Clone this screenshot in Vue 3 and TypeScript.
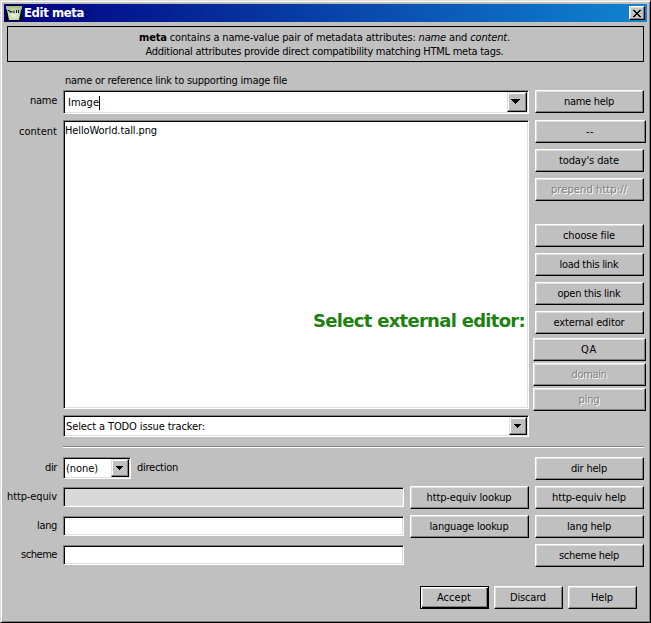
<script setup lang="ts">
interface Action {
  label: string
  width: number
  disabled?: boolean
  kind?: string
}

interface Row {
  label: string
  width: number
  disabled?: boolean
  lookup?: Action
  help: Action
}

// Spreads a label's letters so that it takes the given width in pixels.
const vFit = {
  mounted(el: HTMLElement, binding: { value: number }) {
    const count = (el.textContent ?? '').length
    if (count < 2) return
    const spacing = (binding.value - el.getBoundingClientRect().width) / count
    el.style.letterSpacing = `${spacing.toFixed(3)}px`
  },
}

const actions: Action[] = [
  { label: 'name help', width: 50, kind: 'first' },
  { label: '--', width: 8, kind: 'dash' },
  { label: "today's date", width: 60 },
  { label: 'prepend http://', width: 76, disabled: true, kind: 'prepend' },
  { label: 'choose file', width: 52 },
  { label: 'load this link', width: 59 },
  { label: 'open this link', width: 63 },
  { label: 'external editor', width: 71, kind: 'editor' },
  { label: 'QA', width: 16, kind: 'tight' },
  { label: 'domain', width: 35, disabled: true, kind: 'tight' },
  { label: 'ping', width: 21, disabled: true, kind: 'tight' },
]

const rows: Row[] = [
  {
    label: 'http-equiv',
    width: 50,
    disabled: true,
    lookup: { label: 'http-equiv lookup', width: 85 },
    help: { label: 'http-equiv help', width: 74 },
  },
  {
    label: 'lang',
    width: 20,
    lookup: { label: 'language lookup', width: 79 },
    help: { label: 'lang help', width: 44 },
  },
  { label: 'scheme', width: 36, help: { label: 'scheme help', width: 60 } },
]

const footer: Action[] = [
  { label: 'Accept', width: 34, kind: 'default' },
  { label: 'Discard', width: 36 },
  { label: 'Help', width: 22 },
]
</script>

<template>
  <div class="window">
    <header class="titlebar">
      <svg class="logo" width="16" height="16" viewBox="0 0 16 16">
        <defs>
          <radialGradient id="cup" cx=".5" cy=".65" r=".65">
            <stop offset="0" stop-color="#edf6e2" />
            <stop offset="1" stop-color="#a3bd8c" />
          </radialGradient>
        </defs>
        <rect width="16" height="16" fill="#050805" />
        <path d="M0 1h16v3l-1 1-1 5-1 5H3L2 10 1 5 0 4z" fill="url(#cup)" />
        <path d="M2 5.5h1.500v1H5v1.500M6 6v1.500M8 5.500v3M10.500 5v3M12.500 5v3" fill="none" stroke="#101810" />
      </svg>
      <h1><span v-fit="60">Edit meta</span></h1>
      <button class="close" aria-label="Close">
        <svg width="8" height="7" viewBox="0 0 8 7" shape-rendering="crispEdges">
          <path
            d="M0 0h2v1h1v1h2v-1h1v-1h2v1h-1v1h-1v1h-1v1h1v1h1v1h1v1h-2v-1h-1v-1h-2v1h-1v1h-2v-1h1v-1h1v-1h1v-1h-1v-1h-1v-1h-1z"
          />
        </svg>
      </button>
    </header>

    <section class="info">
      <p>
        <span v-fit="371"><b>meta</b> contains a name-value pair of metadata attributes: <i>name</i> and <i>content</i>.</span>
      </p>
      <p><span v-fit="358">Additional attributes provide direct compatibility matching HTML meta tags.</span></p>
    </section>

    <main class="main">
      <div class="labels">
        <label class="name-label"><span v-fit="27">name</span></label>
        <label><span v-fit="38">content</span></label>
      </div>
      <div class="fields">
        <div class="hint"><span v-fit="222">name or reference link to supporting image file</span></div>
        <div class="combo editable">
          <div class="value"><span v-fit="31">Image</span><i class="caret"></i></div>
          <button class="drop" aria-label="Names"><svg width="9" height="5" shape-rendering="crispEdges"><path d="M0 0h9v1h-1v1h-1v1h-1v1h-1v1h-1v-1h-1v-1h-1v-1h-1v-1h-1z" /></svg></button>
        </div>
        <div class="area">
          <div class="content"><span v-fit="92">HelloWorld.tall.png</span></div>
          <div class="notice"><span v-fit="212">Select external editor:</span></div>
        </div>
        <div class="combo tracker">
          <div class="value"><span v-fit="139">Select a TODO issue tracker:</span></div>
          <button class="drop" aria-label="Trackers"><svg width="7" height="4" shape-rendering="crispEdges"><path d="M0 0h7v1h-1v1h-1v1h-1v1h-1v-1h-1v-1h-1v-1h-1z" /></svg></button>
        </div>
      </div>
      <div class="actions">
        <button v-for="a in actions" :key="a.label" class="button" :class="[a.kind, { off: a.disabled }]">
          <span v-fit="a.width">{{ a.label }}</span>
        </button>
      </div>
    </main>

    <hr />

    <section class="rows">
      <div class="row">
        <label><span v-fit="12">dir</span></label>
        <div class="middle">
          <div class="combo dir">
            <div class="value"><span v-fit="32">(none)</span></div>
            <button class="drop" aria-label="Directions"><svg width="7" height="4" shape-rendering="crispEdges"><path d="M0 0h7v1h-1v1h-1v1h-1v1h-1v-1h-1v-1h-1v-1h-1z" /></svg></button>
          </div>
          <div class="direction"><span v-fit="41">direction</span></div>
        </div>
        <button class="button"><span v-fit="36">dir help</span></button>
      </div>
      <div v-for="r in rows" :key="r.label" class="row">
        <label><span v-fit="r.width">{{ r.label }}</span></label>
        <div class="middle">
          <div class="input" :class="{ filled: r.disabled }"></div>
          <button v-if="r.lookup" class="button lookup">
            <span v-fit="r.lookup.width">{{ r.lookup.label }}</span>
          </button>
        </div>
        <button class="button"><span v-fit="r.help.width">{{ r.help.label }}</span></button>
      </div>
    </section>

    <footer class="footer">
      <button v-for="f in footer" :key="f.label" class="button" :class="f.kind">
        <span v-fit="f.width">{{ f.label }}</span>
      </button>
    </footer>
  </div>
</template>

<style>
body {
  margin: 0;
  overflow: hidden;
}
</style>

<style scoped>
* {
  box-sizing: border-box;
}
.window {
  width: 651px;
  height: 623px;
  padding: 2px 1px 0 2px;
  background: #c0c0c0;
  border: 1px solid;
  border-color: #dfdfdf #000 #000 #dfdfdf;
  box-shadow: inset 1px 1px #fff, inset -1px -1px #808080;
  font: 11px/14px 'DejaVu Sans Condensed', 'DejaVu Sans', sans-serif;
  font-stretch: condensed;
  color: #000;
}
span {
  display: inline-block;
  white-space: nowrap;
}
.titlebar {
  display: flex;
  align-items: center;
  width: 643px;
  height: 18px;
  margin: 1px 0 0 1px;
  padding: 0 2px;
  background: linear-gradient(90deg, #000080, #1084d0);
}
.logo {
  flex: none;
}
h1 {
  flex: 1;
  margin: 0 0 0 2px;
  font: bold 13px/18px 'DejaVu Sans Condensed', 'DejaVu Sans', sans-serif;
  color: #fff;
}
button {
  padding: 0;
  margin: 0;
  font: inherit;
  color: inherit;
  background: #c0c0c0;
  border: 1px solid;
  border-color: #fff #000 #000 #fff;
  border-radius: 0;
  box-shadow: inset -1px -1px #808080, inset 1px 1px #dfdfdf;
}
.close {
  display: flex;
  align-items: center;
  justify-content: center;
  width: 16px;
  height: 14px;
}
.info {
  width: 637px;
  height: 36px;
  margin: 4px 0 0 4px;
  padding: 4px 2px 0 0;
  border: 1px solid #000;
  text-align: center;
}
p {
  margin: 0;
  height: 14px;
}
.main {
  display: flex;
  height: 375px;
}
.labels {
  width: 54px;
  margin-right: 6px;
  text-align: right;
}
label {
  display: block;
}
.name-label {
  height: 31px;
  margin-top: 32px;
}
.fields {
  width: 466px;
  margin-right: 6px;
  padding-top: 12px;
}
.hint {
  height: 16px;
  padding-left: 2px;
}
.combo,
.area,
.input {
  background: #fff;
  border: 1px solid;
  border-color: #808080 #fff #fff #808080;
  box-shadow: inset 1px 1px #000, inset -1px -1px #dfdfdf;
}
.combo {
  display: flex;
  padding: 1px;
}
.value {
  display: flex;
  flex: 1;
  align-items: center;
}
.editable {
  height: 24px;
}
.editable .value {
  padding: 1px 0 0 3px;
}
.caret {
  width: 1px;
  height: 14px;
  background: #000;
}
.drop {
  display: flex;
  flex: none;
  align-items: center;
  justify-content: center;
  width: 18px;
  padding-right: 1px;
  border-color: #dfdfdf #000 #000 #dfdfdf;
  box-shadow: inset -1px -1px #808080, inset 1px 1px #fff;
}
.editable .drop {
  width: 20px;
  height: 20px;
  padding: 0 3px 1px 0;
}
.area {
  display: flex;
  flex-direction: column;
  justify-content: space-between;
  height: 289px;
  margin-top: 6px;
  padding: 3px 3px 76px 1px;
}
.notice {
  font: bold 18px/22px 'DejaVu Sans', sans-serif;
  color: #208010;
  text-align: right;
}
.tracker {
  height: 22px;
  margin-top: 6px;
}
.tracker .value,
.dir .value {
  padding: 1px 0 0 1px;
}
.actions {
  display: flex;
  flex-direction: column;
  align-items: flex-start;
  padding-top: 28px;
}
.button {
  flex: none;
  width: 109px;
  height: 23px;
  margin-bottom: 6px;
  padding-right: 1px;
  text-align: center;
}
.first {
  margin-bottom: 7px;
}
.dash {
  width: 111px;
}
.prepend {
  margin-bottom: 23px;
}
.editor {
  margin-bottom: 4px;
}
.tight {
  width: 113px;
  margin: 0 0 2px -2px;
}
.off {
  color: #808080;
  text-shadow: 1px 1px #fff;
}
hr {
  width: 581px;
  height: 2px;
  margin: 9px 0 9px 60px;
  border: 0;
  border-top: 1px solid #808080;
  border-bottom: 1px solid #fff;
}
.row {
  display: grid;
  grid-template-columns: 54px 478px 109px;
  height: 29px;
  align-items: start;
}
.row label {
  padding-top: 4px;
  text-align: right;
}
.middle {
  display: flex;
  margin-left: 6px;
}
.row .button {
  margin: 0;
}
.dir {
  width: 68px;
  height: 22px;
}
.direction {
  padding: 4px 0 0 6px;
}
.input {
  width: 341px;
  height: 20px;
  margin: 1px 6px 0 0;
}
.filled {
  background: #d9d9d9;
}
.middle .lookup {
  width: 119px;
}
.footer {
  display: flex;
  gap: 5px;
  margin: 13px 0 0 417px;
}
.footer .button {
  width: 69px;
  margin: 0;
}
.footer .default {
  border-color: #000;
  box-shadow: inset 1px 1px #fff, inset -1px -1px #000, inset -2px -2px #808080, inset 2px 2px #dfdfdf;
}
</style>
